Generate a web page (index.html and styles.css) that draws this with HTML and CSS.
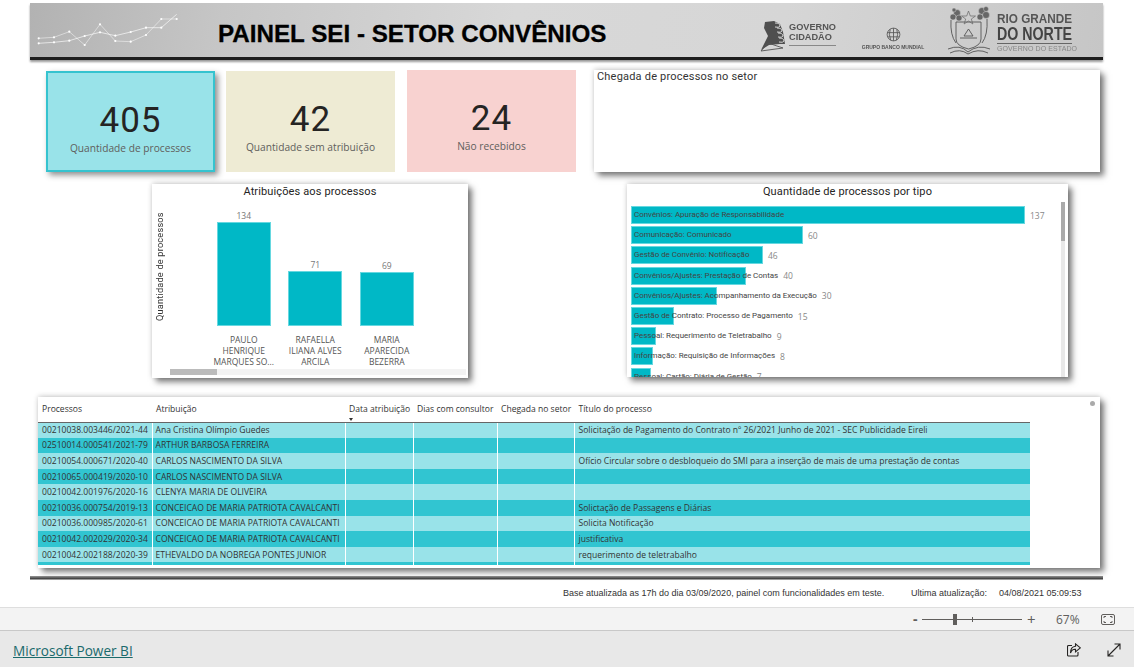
FILE: index.html
```html
<!DOCTYPE html>
<html lang="pt-BR">
<head>
<meta charset="utf-8">
<title>Painel SEI - Setor Convênios</title>
<link rel="stylesheet" href="styles.css">
</head>
<body>
<main class="canvas">
  <header class="banner">
    <svg class="spark" viewBox="0 0 160 55" width="160" height="55" aria-hidden="true">
      <polyline class="spark-line" points="8.7,33.3 24,32.3 39.3,26.7 54.7,40 70,19.3 85.3,36 100.7,36.7 116,30 131.3,14 146.7,14"/>
      <polyline class="spark-line strong" points="8.7,38.3 24,37.3 39.3,35.7 54.7,31 70,27.3 85.3,30.7 100.7,27 116,22.7 131.3,22.7 146.7,9.3"/>
      <g class="spark-dots">
        <circle cx="8.7" cy="33.3" r="1.1"/><circle cx="24" cy="32.3" r="1.1"/><circle cx="39.3" cy="26.7" r="1.1"/><circle cx="54.7" cy="40" r="1.1"/><circle cx="70" cy="19.3" r="1.1"/><circle cx="85.3" cy="36" r="1.1"/><circle cx="100.7" cy="36.7" r="1.1"/><circle cx="116" cy="30" r="1.1"/><circle cx="131.3" cy="14" r="1.1"/><circle cx="146.7" cy="14" r="1.1"/>
        <circle cx="8.7" cy="38.3" r="1.1"/><circle cx="24" cy="37.3" r="1.1"/><circle cx="39.3" cy="35.7" r="1.1"/><circle cx="54.7" cy="31" r="1.1"/><circle cx="70" cy="27.3" r="1.1"/><circle cx="85.3" cy="30.7" r="1.1"/><circle cx="100.7" cy="27" r="1.1"/><circle cx="116" cy="22.7" r="1.1"/><circle cx="131.3" cy="22.7" r="1.1"/>
      </g>
    </svg>
    <h1 class="banner-title">PAINEL SEI - SETOR CONVÊNIOS</h1>
    <div class="logos">
      <div class="logo-gc">
        <svg viewBox="0 0 26 32" width="26" height="32" aria-hidden="true">
          <path class="logo-fill" d="M5 2 L14 1 L20 4 L23 12 L25 24 L20 24 L9 25 L1 30 L8 16 L4 8 Z"/>
          <path class="logo-line" d="M1 31 L8 23 L23 28 Z"/>
          <path class="logo-hand" d="M15 3 q5 0 5 3 q-1 2-5 1 M17 8 q5 0 5 3 q-1 2-5 1 M18 13 q5 0 5 3 q-1 2-5 1 M19 18 q5 0 5 3 q-1 2-5 1"/>
        </svg>
        <div class="gc-text">
          <span>GOVERNO</span>
          <span>CIDADÃO</span>
        </div>
      </div>
      <div class="logo-wb">
        <svg viewBox="0 0 16 16" width="15" height="15" aria-hidden="true">
          <circle class="logo-line" cx="8" cy="8" r="6.8"/>
          <path class="logo-line" d="M8 1.2 V14.8 M1.5 6 H14.5 M2 10.5 H14 M4.5 2.5 Q2.5 8 5 14 M11.5 2.5 Q13.5 8 11 14"/>
        </svg>
        <span>GRUPO BANCO MUNDIAL</span>
      </div>
      <div class="logo-rn">
        <svg viewBox="0 0 46 50" width="46" height="50" aria-hidden="true">
          <path class="logo-line" d="M10 17 H35 V34 Q35 41 22.500 44 Q10 41 10 34 Z"/>
          <path class="logo-line" d="M18 31 L22.500 24 L27 31 Z M14 33 H31"/>
          <path class="logo-star" d="M22.500 6 L24.300 11 L29.500 11 L25.300 14 L26.900 19 L22.500 16 L18.100 19 L19.700 14 L15.500 11 L20.700 11 Z"/>
          <g class="logo-leaf">
            <circle cx="11" cy="8" r="3.500"/><circle cx="7" cy="12" r="3"/><circle cx="13" cy="13" r="3"/><circle cx="8" cy="5" r="2"/>
            <circle cx="36" cy="6" r="3.500"/><circle cx="40" cy="10" r="3.500"/><circle cx="34" cy="12" r="3"/><circle cx="40" cy="4" r="2.500"/>
          </g>
          <path class="logo-line" d="M5 15 Q4 30 10 38 M41 14 Q42 30 36 38 M2 44 Q14 39 22 47 Q32 39 44 44 M4 48 Q14 43 22 49 Q32 43 42 48"/>
        </svg>
        <div class="rn-text">
          <span class="rn-a">RIO GRANDE</span>
          <span class="rn-b">DO NORTE</span>
          <span class="rn-c">GOVERNO DO ESTADO</span>
        </div>
      </div>
    </div>
  </header>

  <section class="top-row">
    <article class="kpi kpi-blue">
      <strong>405</strong>
      <span>Quantidade de processos</span>
    </article>
    <article class="kpi kpi-cream">
      <strong>42</strong>
      <span>Quantidade sem atribuição</span>
    </article>
    <article class="kpi kpi-pink">
      <strong>24</strong>
      <span>Não recebidos</span>
    </article>
    <article class="panel arrival">Chegada de processos no setor</article>
  </section>

  <section class="chart-row">
    <article class="panel chart-people">
      <h2 class="chart-title">Atribuições aos processos</h2>
      <div class="people-body">
        <div class="y-title">Quantidade de processos</div>
        <div class="columns">
          <div class="column">
            <div class="column-plot"><span class="value">134</span><div class="vbar" style="height:104px"></div></div>
            <p class="column-label">PAULO HENRIQUE MARQUES SO...</p>
          </div>
          <div class="column">
            <div class="column-plot"><span class="value">71</span><div class="vbar" style="height:55px"></div></div>
            <p class="column-label">RAFAELLA ILIANA ALVES ARCILA</p>
          </div>
          <div class="column">
            <div class="column-plot"><span class="value">69</span><div class="vbar" style="height:54px"></div></div>
            <p class="column-label">MARIA APARECIDA BEZERRA</p>
          </div>
        </div>
      </div>
      <div class="hscroll"><div class="hscroll-thumb"></div></div>
    </article>

    <article class="panel chart-types">
      <h2 class="chart-title">Quantidade de processos por tipo</h2>
      <div class="types-body">
        <div class="type-list">
          <div class="type-row"><div class="type-cell"><div class="hbar" style="width:394px"></div><span class="type-label">Convênios: Apuração de Responsabilidade</span></div><span class="type-value">137</span></div>
          <div class="type-row"><div class="type-cell"><div class="hbar" style="width:172px"></div><span class="type-label">Comunicação: Comunicado</span></div><span class="type-value">60</span></div>
          <div class="type-row"><div class="type-cell"><div class="hbar" style="width:132px"></div><span class="type-label">Gestão de Convênio: Notificação</span></div><span class="type-value">46</span></div>
          <div class="type-row"><div class="type-cell"><div class="hbar" style="width:115px"></div><span class="type-label">Convênios/Ajustes: Prestação de Contas</span></div><span class="type-value">40</span></div>
          <div class="type-row"><div class="type-cell"><div class="hbar" style="width:86px"></div><span class="type-label">Convênios/Ajustes: Acompanhamento da Execução</span></div><span class="type-value">30</span></div>
          <div class="type-row"><div class="type-cell"><div class="hbar" style="width:43px"></div><span class="type-label">Gestão de Contrato: Processo de Pagamento</span></div><span class="type-value">15</span></div>
          <div class="type-row"><div class="type-cell"><div class="hbar" style="width:25px"></div><span class="type-label">Pessoal: Requerimento de Teletrabalho</span></div><span class="type-value">9</span></div>
          <div class="type-row"><div class="type-cell"><div class="hbar" style="width:22px"></div><span class="type-label">Informação: Requisição de Informações</span></div><span class="type-value">8</span></div>
          <div class="type-row"><div class="type-cell"><div class="hbar" style="width:20px"></div><span class="type-label">Pessoal: Cartão: Diária de Gestão</span></div><span class="type-value">7</span></div>
        </div>
        <div class="vscroll"><div class="vscroll-thumb"></div></div>
      </div>
    </article>
  </section>

  <section class="panel table-panel">
    <span class="scroll-dot"></span>
    <div class="table-clip">
      <table class="grid">
        <colgroup>
          <col class="c1"><col class="c2"><col class="c3"><col class="c4"><col class="c5"><col class="c6">
        </colgroup>
        <thead>
          <tr>
            <th>Processos</th><th>Atribuição</th><th class="sorted">Data atribuição</th><th>Dias com consultor</th><th>Chegada no setor</th><th>Título do processo</th>
          </tr>
        </thead>
        <tbody>
          <tr><td>00210038.003446/2021-44</td><td>Ana Cristina Olímpio Guedes</td><td></td><td></td><td></td><td>Solicitação de Pagamento do Contrato nº 26/2021 Junho de 2021 - SEC Publicidade Eireli</td></tr>
          <tr><td>02510014.000541/2021-79</td><td>ARTHUR BARBOSA FERREIRA</td><td></td><td></td><td></td><td></td></tr>
          <tr><td>00210054.000671/2020-40</td><td>CARLOS NASCIMENTO DA SILVA</td><td></td><td></td><td></td><td>Ofício Circular sobre o desbloqueio do SMI para a inserção de mais de uma prestação de contas</td></tr>
          <tr><td>00210065.000419/2020-10</td><td>CARLOS NASCIMENTO DA SILVA</td><td></td><td></td><td></td><td></td></tr>
          <tr><td>00210042.001976/2020-16</td><td>CLENYA MARIA DE OLIVEIRA</td><td></td><td></td><td></td><td></td></tr>
          <tr><td>00210036.000754/2019-13</td><td>CONCEICAO DE MARIA PATRIOTA CAVALCANTI</td><td></td><td></td><td></td><td>Solictação de Passagens e Diárias</td></tr>
          <tr><td>00210036.000985/2020-61</td><td>CONCEICAO DE MARIA PATRIOTA CAVALCANTI</td><td></td><td></td><td></td><td>Solicita Notificação</td></tr>
          <tr><td>00210042.002029/2020-34</td><td>CONCEICAO DE MARIA PATRIOTA CAVALCANTI</td><td></td><td></td><td></td><td>justificativa</td></tr>
          <tr><td>00210042.002188/2020-39</td><td>ETHEVALDO DA NOBREGA PONTES JUNIOR</td><td></td><td></td><td></td><td>requerimento de teletrabalho</td></tr>
          <tr><td></td><td></td><td></td><td></td><td></td><td></td></tr>
        </tbody>
      </table>
    </div>
  </section>

  <div class="rule"></div>

  <div class="notes">
    <span class="note-base">Base atualizada as 17h do dia 03/09/2020, painel com funcionalidades em teste.</span>
    <span class="note-label">Ultima atualização:</span>
    <span class="note-date">04/08/2021 05:09:53</span>
  </div>
</main>

<div class="zoombar">
  <span class="zoom-minus">-</span>
  <div class="zoom-slider"><span class="zoom-tick"></span><span class="zoom-thumb"></span></div>
  <span class="zoom-plus">+</span>
  <span class="zoom-pct">67%</span>
  <svg class="fit-icon" viewBox="0 0 14 11" width="14" height="11" aria-hidden="true">
    <rect class="icon-thin" x="0.500" y="0.500" width="13" height="10" rx="1.500"/>
    <path class="icon-thin" d="M3 4 V2.500 H5 M9 2.500 H11 V4 M11 7 V8.500 H9 M5 8.500 H3 V7"/>
  </svg>
</div>

<footer class="pbi-footer">
  <a class="pbi-link" href="#">Microsoft Power BI</a>
  <div class="pbi-actions">
    <svg viewBox="0 0 14 14" width="14" height="14" aria-hidden="true">
      <path class="icon-stroke" d="M5 2.500 H1.500 Q0.500 2.500 0.500 3.500 V12 Q0.500 13 1.500 13 H10 Q11 13 11 12 V9"/>
      <path class="icon-stroke" d="M8.500 0.800 L13.300 4.800 L8.500 8.800 V6.300 Q5 6 3.500 10 Q3.500 3.800 8.500 3.300 Z"/>
    </svg>
    <svg viewBox="0 0 14 14" width="14" height="14" aria-hidden="true">
      <path class="icon-stroke" d="M1 13 L13 1 M7.500 1 H13 V6.500 M1 7.500 V13 H6.500"/>
    </svg>
  </div>
</footer>
</body>
</html>
```

FILE: styles.css
```css
* { box-sizing: border-box; }

html, body {
  margin: 0;
  padding: 0;
}

body {
  width: 1134px;
  height: 667px;
  overflow: hidden;
  background: #fff;
  font-family: "Open Sans", "Noto Sans", sans-serif;
  color: #333;
}

.canvas {
  height: 607px;
  padding-top: 3px;
  padding-left: 30px;
  padding-right: 31px;
  background: #fff;
}

/* banner */
.banner {
  height: 57px;
  display: flex;
  align-items: flex-start;
  background: linear-gradient(100deg, #b2b2b2 0%, #c6c6c6 18%, #d8d8d8 45%, #d6d6d6 70%, #c6c6c6 100%);
  border-bottom: 3px solid #1e1e1e;
  box-shadow: 0 2px 2px rgba(0, 0, 0, .4);
}

.spark {
  flex: none;
  margin-top: 2px;
  filter: blur(.3px);
}

.spark-line {
  fill: none;
  stroke: #fff;
  stroke-opacity: .6;
  stroke-width: .8;
}

.spark-line.strong {
  stroke-opacity: .8;
}

.spark-dots circle {
  fill: #fff;
}

.banner-title {
  margin: 17px 0 0 28px;
  flex: none;
  width: 390px;
  font-family: "Liberation Sans", Arial, sans-serif;
  font-size: 24.2px;
  line-height: 27px;
  font-weight: 700;
  color: #000;
  white-space: nowrap;
  -webkit-text-stroke: .3px #000;
}

.logos {
  flex: 1;
  display: flex;
  align-items: flex-start;
  color: #555;
  filter: blur(.35px);
}

.logo-fill { fill: #4f4f4f; }
.logo-line { fill: none; stroke: #555; stroke-width: .9; }
.logo-hand { fill: none; stroke: #d6d6d6; stroke-width: 1; }
.logo-star { fill: none; stroke: #666; stroke-width: .7; }
.logo-leaf circle { fill: #666; stroke: #ccc; stroke-width: .5; }

.logo-gc {
  margin: 17px 0 0 152px;
  display: flex;
  gap: 3px;
  width: 78px;
}

.gc-text {
  display: flex;
  flex-direction: column;
  font-family: "Liberation Sans", Arial, sans-serif;
  font-size: 9.2px;
  line-height: 10px;
  font-weight: 700;
  padding-top: 2px;
  height: 26px;
  border-bottom: 1px solid #888;
}

.logo-wb {
  margin: 24px 0 0 23px;
  width: 64px;
  display: flex;
  flex-direction: column;
  align-items: center;
  font-family: "Liberation Sans", Arial, sans-serif;
  font-size: 5px;
  line-height: 6px;
  font-weight: 700;
  white-space: nowrap;
}

.logo-wb svg { margin-bottom: 2px; }

.logo-rn {
  margin: 2px 0 0 21px;
  display: flex;
  gap: 5px;
}

.rn-text {
  display: flex;
  flex-direction: column;
  font-family: "Liberation Sans", Arial, sans-serif;
  white-space: nowrap;
  padding-top: 7px;
}

.rn-a, .rn-b {
  font-weight: 700;
  transform-origin: left center;
}

.rn-a { font-size: 13.5px; line-height: 13px; color: #555; transform: scaleX(.87); }
.rn-b { font-size: 18px; line-height: 18px; color: #444; transform: scaleX(.79); }
.rn-c {
  width: 75px;
  font-size: 7px;
  line-height: 9px;
  letter-spacing: .1px;
  color: #888;
  border-top: 1px solid #666;
}

/* KPI row */
.top-row {
  display: flex;
  gap: 11px;
  margin-top: 10px;
  padding-left: 16px;
  height: 102px;
}

.kpi {
  width: 169px;
  height: 101px;
  margin-top: 1px;
  display: flex;
  flex-direction: column;
  align-items: center;
  padding-top: 29px;
}

.kpi strong {
  font-family: Roboto, sans-serif;
  font-weight: 400;
  font-size: 35px;
  line-height: 41px;
  letter-spacing: 1px;
  color: #252423;
}

.kpi span {
  font-size: 10.2px;
  line-height: 14px;
  color: #605e5c;
}

.kpi-blue {
  background: #99e3e9;
  border: 2px solid #35c3cf;
  padding-top: 27px;
  box-shadow: 3px 3px 6px rgba(0, 0, 0, .45);
}

.kpi-cream { background: #eeebd4; padding-top: 28px; }

.kpi-pink {
  background: #f8d2d0;
  height: 102px;
  margin-top: 0;
  margin-left: 1px;
  padding-top: 28px;
}

/* shared panel */
.panel {
  background: #fff;
  box-shadow: 4px 4px 6px rgba(0, 0, 0, .5), 0 -1px 5px rgba(0, 0, 0, .18);
}

.arrival {
  width: 506px;
  margin-left: 7px;
  padding: 0 3px;
  font-family: Roboto, sans-serif;
  font-size: 11px;
  line-height: 14px;
  letter-spacing: .2px;
  color: #333;
}

/* chart row */
.chart-row {
  display: flex;
  margin-top: 12px;
  padding-left: 122px;
  height: 194px;
}

.chart-title {
  margin: 0;
  font-family: Roboto, sans-serif;
  font-size: 11px;
  line-height: 16px;
  font-weight: 400;
  letter-spacing: .13px;
  color: #252423;
  text-align: center;
}

.chart-people {
  width: 316px;
  display: flex;
  flex-direction: column;
}

.people-body {
  display: flex;
  flex: 1;
}

.y-title {
  flex: none;
  width: 16px;
  height: 121px;
  margin: 6px 40px 0 0;
  writing-mode: vertical-rl;
  transform: rotate(180deg);
  font-family: Roboto, sans-serif;
  font-size: 9.2px;
  line-height: 16px;
  letter-spacing: .2px;
  text-align: center;
  color: #333;
  white-space: nowrap;
}

.columns {
  display: flex;
}

.column {
  width: 71.5px;
  display: flex;
  flex-direction: column;
  align-items: center;
}

.column-plot {
  height: 126px;
  display: flex;
  flex-direction: column;
  justify-content: flex-end;
  align-items: center;
}

.value {
  font-size: 8.5px;
  line-height: 12px;
  color: #777;
}

.vbar {
  width: 54px;
  background: #00b8c6;
  border: 1px solid #66d8e0;
}

.column-label {
  margin: 8px 0 0;
  width: 66px;
  text-align: center;
  font-size: 8.5px;
  line-height: 11px;
  color: #555;
}

.hscroll {
  margin: 0 2px 3px 18px;
  height: 6px;
  background: #f3f3f3;
}

.hscroll-thumb {
  width: 47px;
  height: 6px;
  background: #bbb;
}

.chart-types {
  width: 441px;
  height: 193px;
  margin-left: 159px;
  display: flex;
  flex-direction: column;
}

.types-body {
  display: flex;
  flex: 1;
  min-height: 0;
  padding-left: 4px;
  padding-top: 2px;
}

.type-list {
  width: 430px;
  overflow: hidden;
  padding-top: 3px;
}

.type-row {
  display: flex;
  align-items: center;
  height: 20.2px;
}

.type-cell {
  display: grid;
  align-items: center;
}

.hbar, .type-label {
  grid-area: 1 / 1;
}

.hbar {
  height: 18px;
  background: #00b8c6;
  border: 1px solid #66d8e0;
}

.type-label {
  position: relative;
  padding-left: 3px;
  font-family: Roboto, sans-serif;
  font-size: 8px;
  line-height: 12px;
  letter-spacing: -.03px;
  color: #444;
  white-space: nowrap;
}

.type-value {
  margin-left: 5px;
  font-size: 8.5px;
  color: #888;
}

.vscroll {
  width: 4px;
  background: #e8e8e8;
}

.vscroll-thumb {
  width: 4px;
  height: 39px;
  background: #aaa;
}

/* table */
.table-panel {
  position: relative;
  margin: 19px 0 0 8px;
  width: 1062px;
  height: 171px;
}

.scroll-dot {
  position: absolute;
  top: 4px;
  right: 5px;
  width: 5px;
  height: 5px;
  border-radius: 50%;
  background: #aaa;
}

.table-clip {
  width: 992px;
  height: 168px;
  overflow: hidden;
}

.grid {
  width: 992px;
  table-layout: fixed;
  border-collapse: collapse;
  font-size: 8.55px;
  color: #333;
}

.c1 { width: 114px; }
.c2 { width: 193px; }
.c3 { width: 68px; }
.c4 { width: 84px; }
.c5 { width: 77px; }
.c6 { width: 456px; }

.grid th {
  height: 25px;
  padding: 0 4px;
  text-align: left;
  font-weight: 400;
  white-space: nowrap;
  border-bottom: 1px solid #666;
  color: #333;
}

.grid th:last-child { padding-left: 4.5px; }

.grid th.sorted {
  position: relative;
}

.grid th.sorted::after {
  content: "";
  position: absolute;
  left: 4px;
  bottom: 1px;
  border-left: 2.5px solid transparent;
  border-right: 2.5px solid transparent;
  border-top: 3px solid #333;
}

.grid td {
  height: 15.6px;
  padding: 0 4px;
  line-height: 12px;
  white-space: nowrap;
  overflow: hidden;
  border-right: 1px solid rgba(255, 255, 255, .15);
}

.grid td:nth-child(2) { padding-left: 3px; }

.grid tbody tr:nth-child(odd) { background: #99e3e9; }
.grid tbody tr:nth-child(even) { background: #31c5d1; }

/* bottom rule and notes */
.rule {
  margin-top: 8px;
  height: 4px;
  background: linear-gradient(#999, #444 65%, #ccc);
}

.notes {
  display: flex;
  margin-top: 7px;
  padding-left: 533px;
  font-family: "Liberation Sans", Arial, sans-serif;
  font-size: 9px;
  line-height: 12px;
  color: #333;
}

.note-base { width: 348px; flex: none; }
.note-label { width: 88px; flex: none; }
.note-date { white-space: nowrap; }

/* zoom bar */
.zoombar {
  height: 24px;
  display: flex;
  align-items: center;
  padding-left: 913px;
  background: #f3f3f3;
  border-top: 1px solid #dedede;
  border-bottom: 1px solid #c8c8c8;
  color: #605e5c;
}

.zoom-minus {
  width: 9px;
  font-size: 14px;
  line-height: 14px;
  font-weight: 700;
}

.zoom-slider {
  position: relative;
  width: 100px;
  height: 1px;
  background: #605e5c;
}

.zoom-thumb {
  position: absolute;
  left: 31px;
  top: -5px;
  width: 4px;
  height: 11px;
  background: #605e5c;
}

.zoom-tick {
  position: absolute;
  left: 50px;
  top: -2px;
  width: 1px;
  height: 5px;
  background: #605e5c;
}

.zoom-plus {
  margin-left: 5px;
  width: 29px;
  font-size: 15px;
  line-height: 15px;
}

.zoom-pct {
  width: 45px;
  font-size: 12px;
}

.fit-icon { flex: none; }

.icon-thin {
  fill: none;
  stroke: #605e5c;
  stroke-width: 1;
}

/* footer */
.pbi-footer {
  height: 36px;
  display: flex;
  align-items: center;
  justify-content: space-between;
  padding: 2px 13px 0 13px;
  background: #e8e8e8;
}

.pbi-link {
  font-size: 13.6px;
  color: #1a6a6c;
  text-decoration: underline;
}

.pbi-actions {
  display: flex;
  gap: 26px;
  margin-top: -1px;
}

.icon-stroke {
  fill: none;
  stroke: #252423;
  stroke-width: 1.1;
}
```
